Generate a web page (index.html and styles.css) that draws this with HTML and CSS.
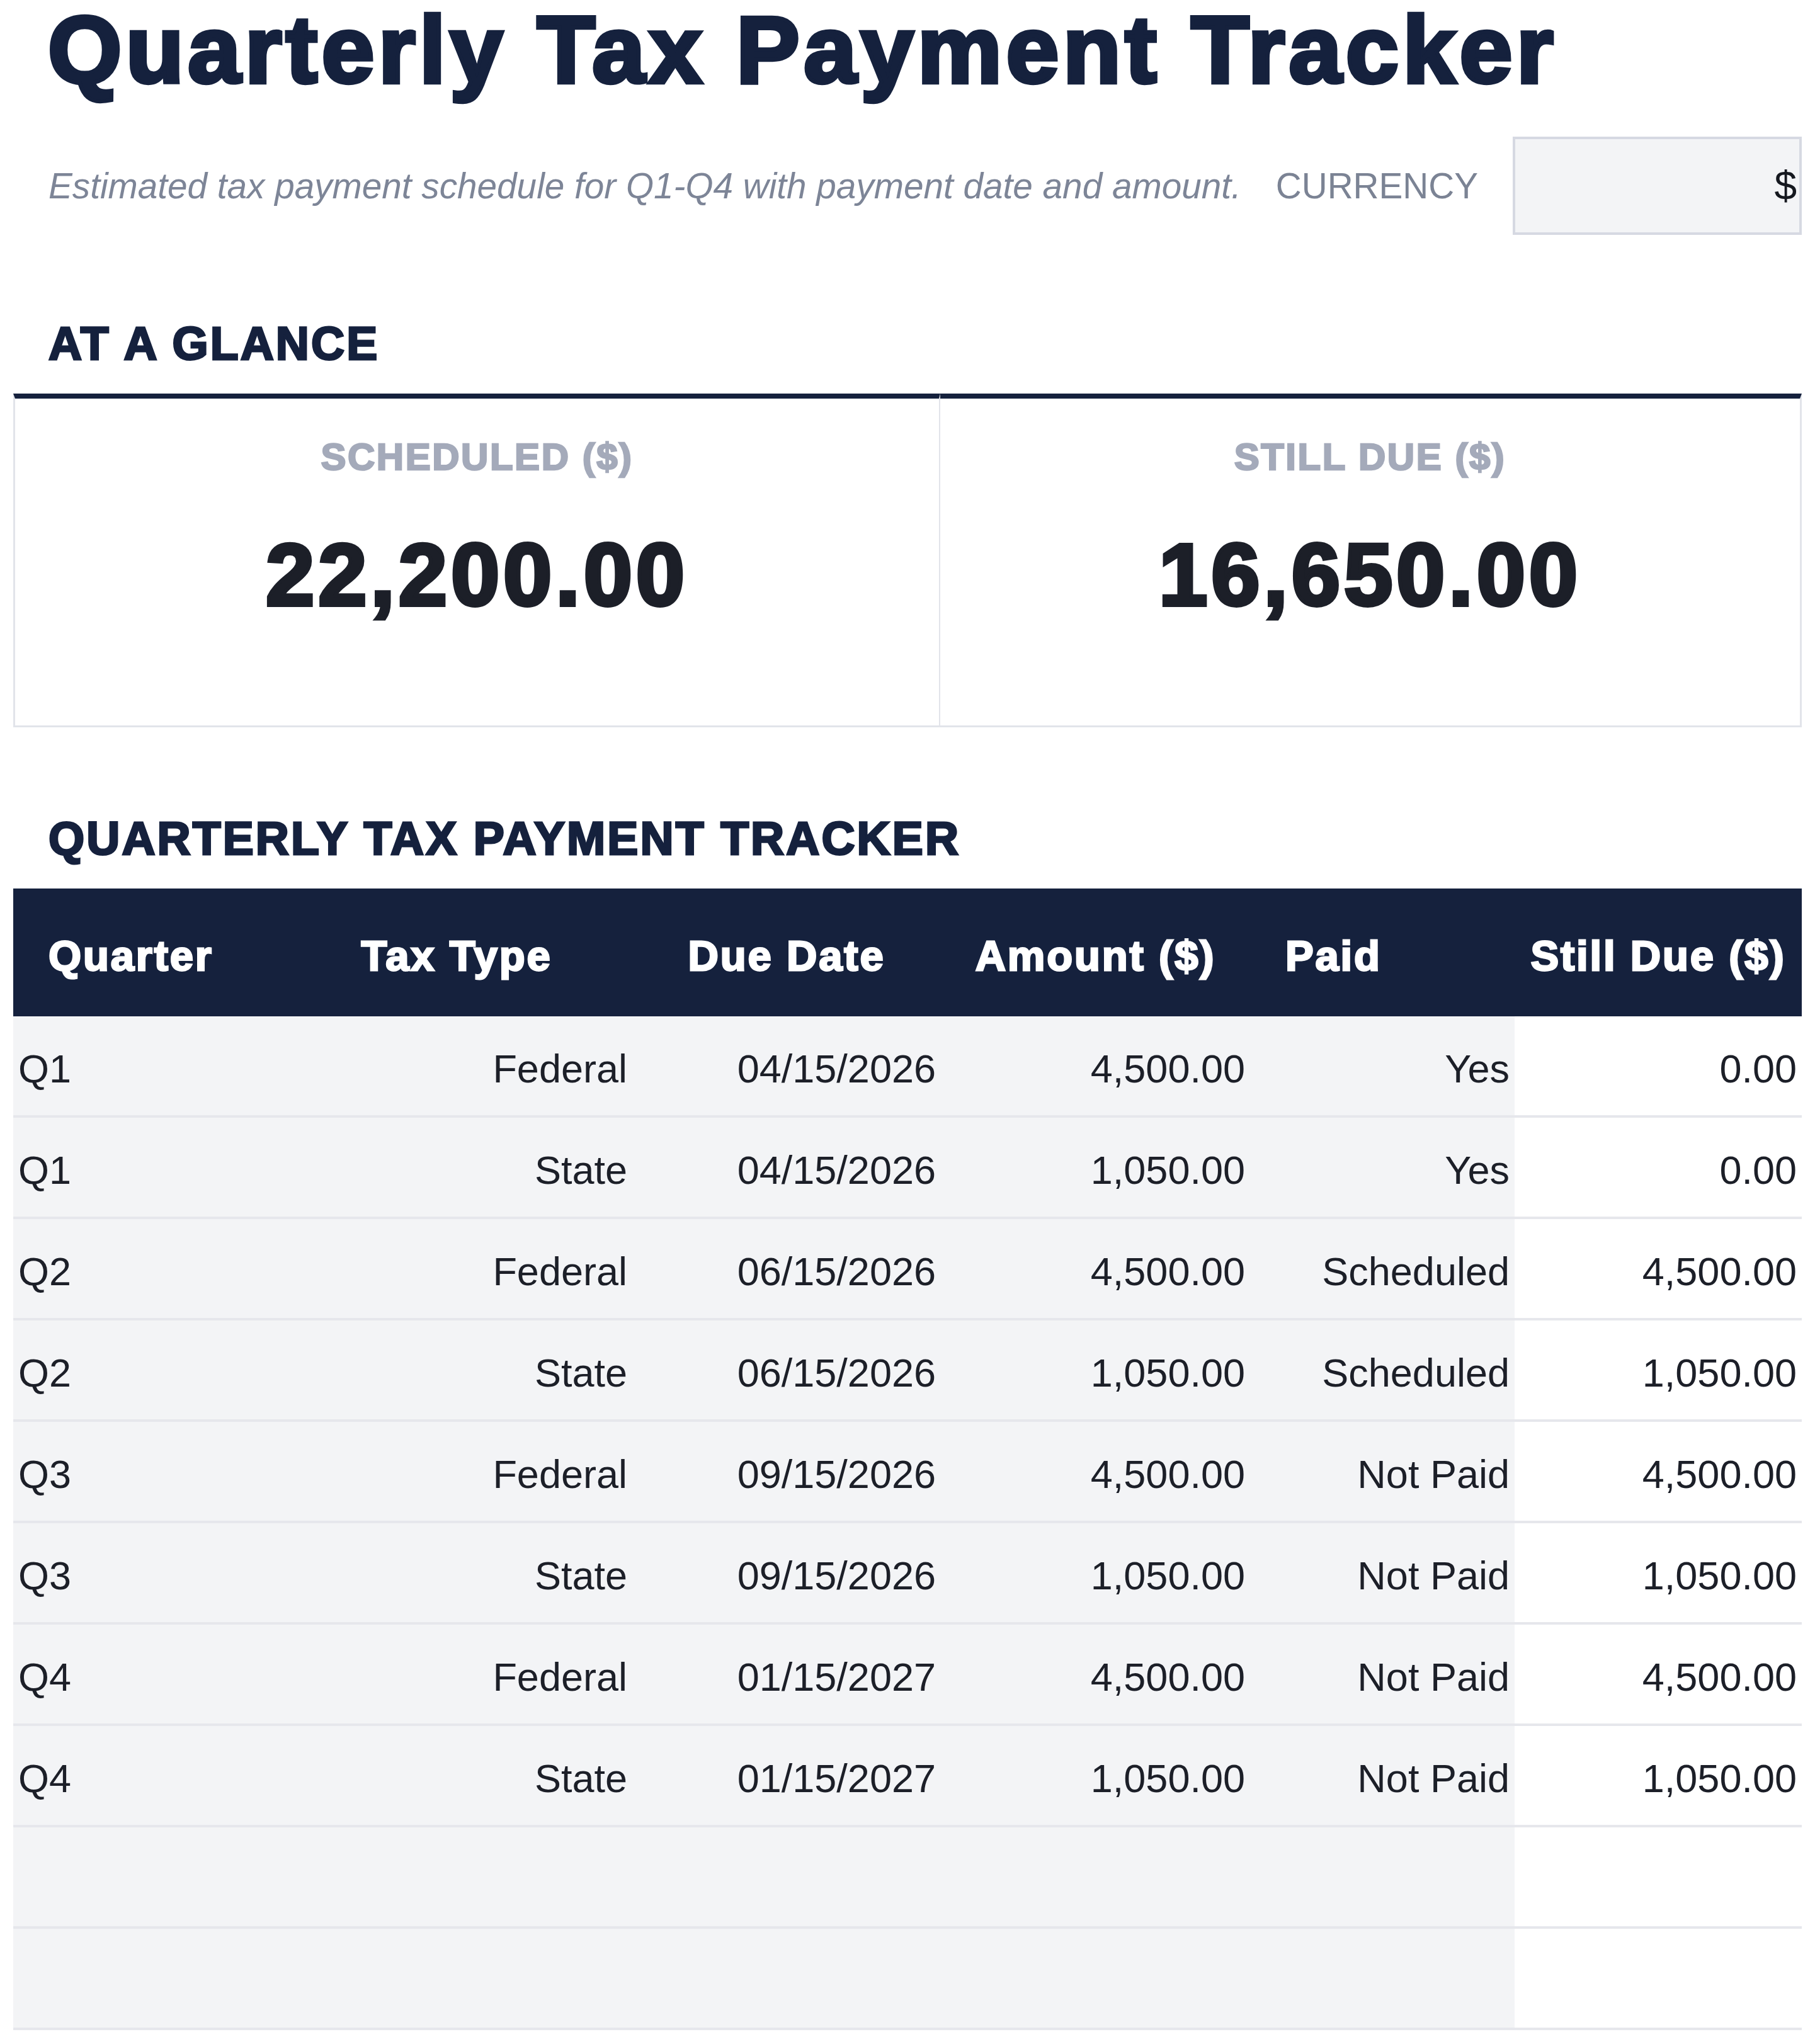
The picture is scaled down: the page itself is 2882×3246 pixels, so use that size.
FILE: index.html
```html
<!DOCTYPE html>
<html lang="en">
<head>
<meta charset="utf-8">
<title>Quarterly Tax Payment Tracker</title>
<link rel="stylesheet" href="styles.css">
</head>
<body>
<main class="page">
  <h1 class="title">Quarterly Tax Payment Tracker</h1>
  <div class="intro">
    <p class="subtitle">Estimated tax payment schedule for Q1-Q4 with payment date and amount.</p>
    <span class="currency-label">CURRENCY</span>
    <div class="currency-box">$</div>
  </div>

  <h2 class="section-title glance-title">AT A GLANCE</h2>
  <section class="cards">
    <div class="card card-wide">
      <div class="card-label">SCHEDULED ($)</div>
      <div class="card-value">22,200.00</div>
    </div>
    <div class="card">
      <div class="card-label">STILL DUE ($)</div>
      <div class="card-value">16,650.00</div>
    </div>
  </section>

  <h2 class="section-title tracker-title">QUARTERLY TAX PAYMENT TRACKER</h2>
  <table class="tracker">
    <colgroup>
      <col class="c-quarter">
      <col class="c-type">
      <col class="c-date">
      <col class="c-amount">
      <col class="c-paid">
      <col class="c-due">
    </colgroup>
    <thead>
      <tr>
        <th class="th-left">Quarter</th>
        <th>Tax Type</th>
        <th>Due Date</th>
        <th>Amount ($)</th>
        <th class="th-left">Paid</th>
        <th>Still Due ($)</th>
      </tr>
    </thead>
    <tbody>
      <tr><td>Q1</td><td>Federal</td><td>04/15/2026</td><td>4,500.00</td><td>Yes</td><td>0.00</td></tr>
      <tr><td>Q1</td><td>State</td><td>04/15/2026</td><td>1,050.00</td><td>Yes</td><td>0.00</td></tr>
      <tr><td>Q2</td><td>Federal</td><td>06/15/2026</td><td>4,500.00</td><td>Scheduled</td><td>4,500.00</td></tr>
      <tr><td>Q2</td><td>State</td><td>06/15/2026</td><td>1,050.00</td><td>Scheduled</td><td>1,050.00</td></tr>
      <tr><td>Q3</td><td>Federal</td><td>09/15/2026</td><td>4,500.00</td><td>Not Paid</td><td>4,500.00</td></tr>
      <tr><td>Q3</td><td>State</td><td>09/15/2026</td><td>1,050.00</td><td>Not Paid</td><td>1,050.00</td></tr>
      <tr><td>Q4</td><td>Federal</td><td>01/15/2027</td><td>4,500.00</td><td>Not Paid</td><td>4,500.00</td></tr>
      <tr><td>Q4</td><td>State</td><td>01/15/2027</td><td>1,050.00</td><td>Not Paid</td><td>1,050.00</td></tr>
      <tr><td></td><td></td><td></td><td></td><td></td><td></td></tr>
      <tr><td></td><td></td><td></td><td></td><td></td><td></td></tr>
    </tbody>
  </table>
</main>
</body>
</html>
```

FILE: styles.css
```css
html, body {
  margin: 0;
  padding: 0;
  background: #ffffff;
}

body {
  font-family: "Liberation Sans", Arial, sans-serif;
  color: #1c1f28;
}

.page {
  padding: 0 21px 20px 21px;
}

/* heavy display weight: bold face thickened by a stroke, with matching tracking */
.title,
.section-title,
.card-label,
.card-value,
.tracker th {
  font-weight: 700;
  letter-spacing: 0.042em;
  -webkit-text-stroke-width: 0.042em;
  -webkit-text-stroke-color: currentColor;
}

.title {
  margin: 3px 0 0 0;
  padding-left: 55px;
  font-size: 151px;
  line-height: 1;
  color: #15213d;
}

.intro {
  display: flex;
  align-items: center;
  gap: 55px;
  margin-top: 63px;
  padding-left: 56px;
}

.subtitle {
  margin: 0;
  font-size: 56.7px;
  font-style: italic;
  color: #7d8597;
  white-space: nowrap;
}

.currency-label {
  font-size: 56.7px;
  color: #7b8394;
}

.currency-box {
  flex: 1;
  height: 156px;
  box-sizing: border-box;
  border: 4px solid #d6d9e2;
  background: #f3f4f6;
  display: flex;
  align-items: center;
  justify-content: flex-end;
  padding-right: 4px;
  font-size: 64px;
  color: #15181f;
}

.section-title {
  margin: 0;
  padding-left: 56px;
  font-size: 73.5px;
  line-height: 1;
  color: #15213d;
}

.glance-title {
  margin-top: 136px;
}

.cards {
  display: grid;
  grid-template-columns: 1472fr 1368fr;
  margin-top: 42px;
}

.card {
  height: 530px;
  box-sizing: border-box;
  border: 3px solid #e2e4ea;
  border-top: 8px solid #15213d;
  text-align: center;
  padding-top: 63px;
}

.card-wide {
  border-right-width: 2px;
}

.card + .card {
  border-left: 0;
}

.card-label {
  font-size: 60px;
  line-height: 1;
  color: #a4aaba;
}

.card-value {
  margin-top: 87px;
  font-size: 139px;
  line-height: 1;
  color: #1c1f28;
}

.tracker-title {
  margin-top: 140px;
}

.tracker {
  width: 100%;
  margin-top: 43px;
  border-collapse: separate;
  border-spacing: 0;
  table-layout: fixed;
}

.c-quarter { width: 425px; }
.c-type { width: 558px; }
.c-date { width: 490px; }
.c-amount { width: 491px; }
.c-paid { width: 420px; }
.c-due { width: 456px; }

.tracker thead tr {
  height: 203px;
}

.tracker th {
  background: #15213d;
  color: #ffffff;
  font-size: 67px;
  text-align: center;
  padding: 9px 0 0 0;
}

.tracker th.th-left {
  text-align: left;
  padding-left: 56px;
}

.tracker tbody tr {
  height: 161px;
}

.tracker td {
  box-sizing: border-box;
  padding: 8px 8px 0 8px;
  font-size: 63px;
  text-align: right;
  background: #f3f4f6;
  border-bottom: 4px solid #e6e7ec;
  color: #1c1f28;
}

.tracker td:first-child {
  text-align: left;
}

.tracker td:last-child {
  background: #ffffff;
}
```
